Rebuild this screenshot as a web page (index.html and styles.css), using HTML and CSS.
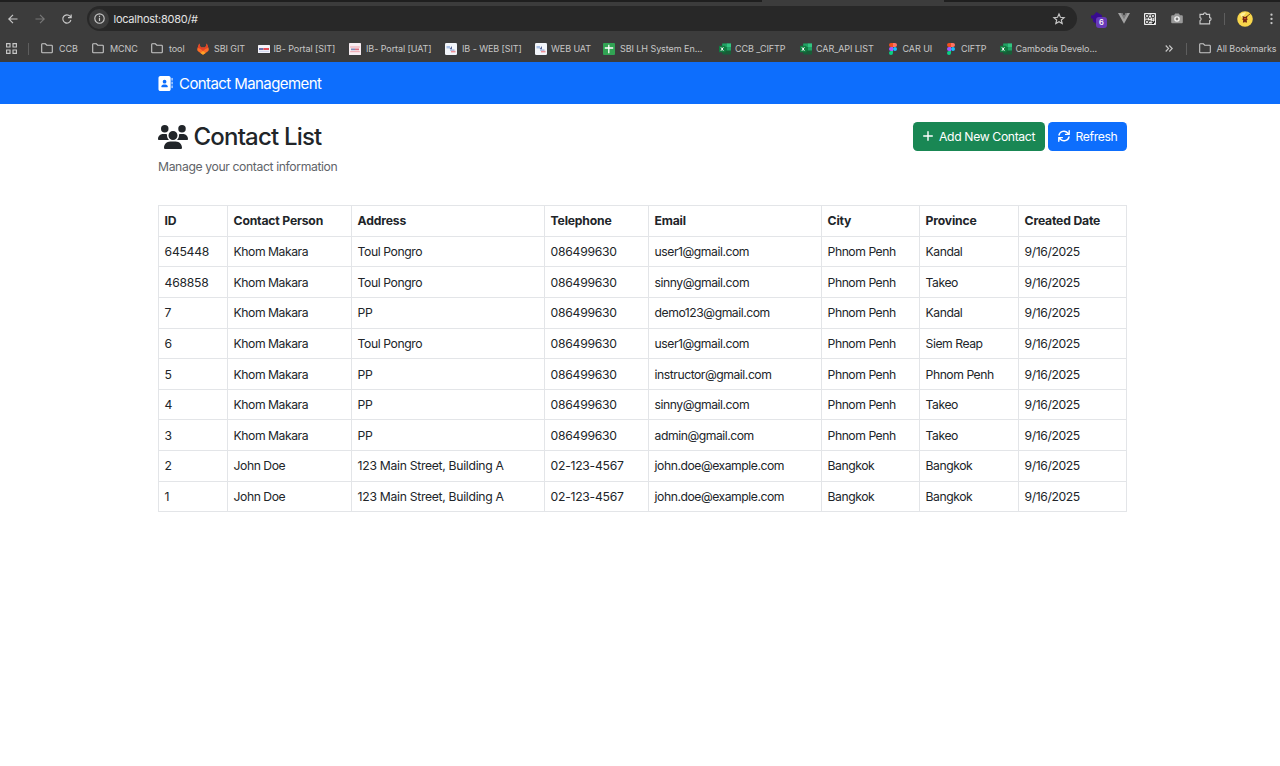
FILE: index.html
```html
<!DOCTYPE html>
<html lang="en">
<head>
<meta charset="utf-8">
<title>Contact Management</title>
<link rel="stylesheet" href="styles.css">
</head>
<body>
<svg class="defs" aria-hidden="true">
  <symbol id="folder" viewBox="0 0 12 11"><path d="M.7 9.1V1.5Q.7.8 1.4.8H4.4L5.7 2.2H10.6Q11.3 2.2 11.3 2.9V9.1Q11.3 9.8 10.6 9.8H1.4Q.7 9.8 .7 9.1Z" fill="none" stroke="#c7c7c7" stroke-width="1.1"/></symbol>
  <symbol id="web" viewBox="0 0 12 12"><rect width="12" height="12" rx="1.3" fill="#f2f5fa"/><path d="M1.5 3H5V5.4H1.5Z" fill="#a9c0e6"/><path d="M4.6 6 7 3V6.5Z" fill="#56679b"/><path d="M5 6.4H9.5V7.8H5Z" fill="#9db5e0"/><path d="M6 7.8H10.5V9.4H6Z" fill="#ee8f97"/></symbol>
  <symbol id="excel" viewBox="0 0 12 12"><path d="M3.2 1Q3.2.4 3.8.4H11.4Q12 .4 12 1V11Q12 11.6 11.4 11.6H3.8Q3.2 11.6 3.2 11Z" fill="#185c37"/><path d="M3.2.4H7.6V4H3.2ZM7.6 4H12V7.6H7.6Z" fill="#21a366"/><path d="M7.6.4H12V4H7.6Z" fill="#33c481"/><path d="M3.2 4H7.6V7.6H3.2Z" fill="#107c41"/><rect y="2.8" width="6.5" height="6.5" rx=".6" fill="#107c41"/><path d="M1.9 4.3 4.4 7.8M4.4 4.3 1.9 7.8" stroke="#fff" stroke-width="1"/></symbol>
  <symbol id="figma" viewBox="0 0 8 12"><path d="M2 0H4V4H2A2 2 0 0 1 2 0Z" fill="#f24e1e"/><path d="M4 0H6A2 2 0 0 1 6 4H4Z" fill="#ff7262"/><path d="M2 4H4V8H2A2 2 0 0 1 2 4Z" fill="#a259ff"/><circle cx="6" cy="6" r="2" fill="#1abcfe"/><path d="M2 8H4V10A2 2 0 1 1 2 8Z" fill="#0acf83"/></symbol>
</svg>

<header class="browser">
  <div class="tabstrip"><span class="tab-active"></span></div>
  <div class="toolbar">
    <svg width="10" height="10" viewBox="0 0 10 10" class="line"><path d="M9.5 5H1M5 .8.8 5 5 9.2"/></svg>
    <svg width="10" height="10" viewBox="0 0 10 10" class="line dim"><path d="M.5 5H9M5 .8 9.2 5 5 9.2"/></svg>
    <svg width="10" height="10" viewBox="0 0 10 10" class="line"><path d="M8.9 6A4.1 4.1 0 1 1 8 2.2L9.2 3.5M9.2.4V3.6H6"/></svg>
    <div class="omnibox">
      <span class="site-info"><svg width="11" height="11" viewBox="0 0 11 11" class="line"><circle cx="5.5" cy="5.5" r="4.7"/><path d="M5.5 4.8V8M5.5 2.8V4"/></svg></span>
      <span class="url">localhost:8080/#</span>
      <svg width="12" height="12" viewBox="0 0 12 12" class="line star"><path d="M6 .9 7.4 4.3 11.1 4.6 8.3 7 9.2 10.6 6 8.7 2.8 10.6 3.7 7 .9 4.6 4.6 4.3Z"/></svg>
    </div>
    <span class="ext">
      <svg width="14" height="14" viewBox="0 0 14 14"><path d="M6.5 0 12 3.2V9L6.5 12 3 9.5V7L1 6V3.5L3.6 3.3Z" fill="#380b8f"/></svg>
      <span class="badge">6</span>
    </span>
    <svg width="12" height="11" viewBox="0 0 12 11"><path d="M0 0H4.2L6 3.2 7.8 0H12L6 10.8Z" fill="#a3a3a3"/><path d="M2.5 0H4.2L6 3.2 7.8 0H9.5L6 6.2Z" fill="#7d7d7d"/></svg>
    <svg width="12" height="12" viewBox="0 0 12 12"><rect width="12" height="12" rx=".7" fill="#ededed"/><path d="M1.6 1.6H4.4V4.4H1.6ZM7.6 1.6H10.4V4.4H7.6ZM1.6 7.6H4.4V10.4H1.6Z" fill="none" stroke="#222" stroke-width=".9"/><path d="M5.5 1H6.3V3H5.5ZM5.3 4.3H6.5V6H5.3ZM1 5.5H4V6.3H1ZM5.3 7H6.5V9H5.3ZM8 5.5H9.3V6.5H8ZM10 5.4H11V6.4H10ZM5.5 10H6.5V11H5.5ZM7.5 7.7H8.8V8.5H10V7.5H11V9.7H10V11H7.5V10H8.6V9.2H7.5Z" fill="#222"/></svg>
    <svg width="12" height="11" viewBox="0 0 12 11"><path d="M1.2 2.2H3L4.2.5H7.8L9 2.2H10.8Q11.8 2.2 11.8 3.2V9.3Q11.8 10.3 10.8 10.3H1.2Q.2 10.3 .2 9.3V3.2Q.2 2.2 1.2 2.2Z" fill="#999"/><circle cx="6" cy="6" r="2.1" fill="#777" stroke="#f5f5f5" stroke-width="1.4"/></svg>
    <svg width="13" height="13" viewBox="0 0 13 13" class="line"><path d="M1 2.4H4.400A1.5 1.5 0 0 1 7.400 2.4H10.6V5.600A1.5 1.5 0 0 1 10.6 8.600V11.8H1V8.700A1.7 1.7 0 0 0 1 5.500Z"/></svg>
    <span class="rule"></span>
    <svg width="16" height="16" viewBox="0 0 16 16"><circle cx="8" cy="8" r="7.8" fill="#f8d64c"/><path d="M3 3.5A6.5 6.5 0 0 1 9 1.6L5 7Z" fill="#fff19a"/><path d="M8.5 6.5 14 2.2" stroke="#75511a" stroke-width="1"/><path d="M5.400 5 8 6 10.5 5 10 7 10.7 8.7 9.7 9 10 11.5H8.600L8 10.5 7.300 11.5H5.900L6.200 9 5.300 8.700 5.900 7Z" fill="#702413"/><path d="M7 7H9.3V8.2H7Z" fill="#c9512b"/></svg>
    <svg width="3" height="12" viewBox="0 0 3 12" fill="#c7c7c7"><circle cx="1.5" cy="1.700" r="1.15"/><circle cx="1.5" cy="5.900" r="1.15"/><circle cx="1.5" cy="10.100" r="1.15"/></svg>
  </div>
  <nav class="bookmarks">
    <svg width="11" height="11" viewBox="0 0 11 11" class="line"><path d="M.6.6H4V4H.6ZM7 .6H10.4V4H7ZM.6 7H4V10.4H.6ZM7 7H10.4V10.4H7Z"/></svg>
    <span class="rule"></span>
    <a class="bm folder"><svg width="12" height="11"><use href="#folder"/></svg>CCB</a>
    <a class="bm folder"><svg width="12" height="11"><use href="#folder"/></svg>MCNC</a>
    <a class="bm folder"><svg width="12" height="11"><use href="#folder"/></svg>tool</a>
    <a class="bm wide"><svg width="12" height="12" viewBox="0 0 12 12"><path d="M2.2.5 3.7 4.6H8.3L9.8.5 11.8 6Q12 7.5 10.7 8.5L6 11.7 1.3 8.5Q0 7.5 .2 6Z" fill="#fc6d26"/><path d="M2.2.5 3.7 4.6H8.3L9.8.5 11.3 4.7 8.4 6 6 8 3.6 6 .7 4.7Z" fill="#e24329"/><path d="M3.4 9.9 6 8 8.6 9.9 6 11.7Z" fill="#fca326"/></svg>SBI GIT</a>
    <a class="bm"><svg width="12" height="12" viewBox="0 0 12 12"><rect y="2" width="12" height="8" rx=".5" fill="#f4f4fa"/><path d="M1 5H5.5V7H1Z" fill="#6a70a8"/><path d="M5.5 5H11V7H5.5Z" fill="#e44c55"/><path d="M1 8.3H11" stroke="#aebbe0" stroke-width=".6"/></svg>IB- Portal [SIT]</a>
    <a class="bm wide"><svg width="12" height="12" viewBox="0 0 12 12"><rect width="12" height="12" rx=".6" fill="#f7edf2"/><path d="M1.2 4H10.8M1.2 8.7H10.8" stroke="#eb98a4" stroke-width=".9"/><path d="M2 5.5H6V7.2H2Z" fill="#8089b8"/><path d="M6 5.5H10V7.2H6Z" fill="#dc6c7c"/></svg>IB- Portal [UAT]</a>
    <a class="bm wide"><svg width="12" height="12"><use href="#web"/></svg>IB - WEB [SIT]</a>
    <a class="bm"><svg width="12" height="12"><use href="#web"/></svg>WEB UAT</a>
    <a class="bm wide"><svg width="12" height="12" viewBox="0 0 12 12"><rect width="12" height="12" rx="1" fill="#31a353"/><path d="M5.8 1.8V10.2M1.8 5H10.2" stroke="#fff" stroke-width="1.3"/></svg>SBI LH System En...</a>
    <a class="bm"><svg width="12" height="12"><use href="#excel"/></svg>CCB _CIFTP</a>
    <a class="bm"><svg width="12" height="12"><use href="#excel"/></svg>CAR_API LIST</a>
    <a class="bm fig"><svg width="8" height="12"><use href="#figma"/></svg>CAR UI</a>
    <a class="bm fig"><svg width="8" height="12"><use href="#figma"/></svg>CIFTP</a>
    <a class="bm"><svg width="12" height="12"><use href="#excel"/></svg>Cambodia Develo...</a>
    <svg width="8" height="7" viewBox="0 0 8 7" class="line"><path d="M.7.5 3.6 3.5.7 6.5M4.3.5 7.2 3.5 4.3 6.5"/></svg>
    <span class="rule"></span>
    <a class="bm folder all"><svg width="12" height="11"><use href="#folder"/></svg>All Bookmarks</a>
  </nav>
</header>

<div class="navbar">
  <svg width="15" height="15" viewBox="16 0 512 512" fill="#fff"><path d="M96 0C60.7 0 32 28.7 32 64V448C32 483.3 60.7 512 96 512H384C419.3 512 448 483.3 448 448V64C448 28.700 419.300 0 384 0ZM208 288H272C316.2 288 352 323.8 352 368C352 376.800 344.800 384 336 384H144C135.200 384 128 376.800 128 368C128 323.800 163.800 288 208 288ZM176 192A64 64 0 1 1 304 192A64 64 0 1 1 176 192Z" fill-rule="evenodd"/><path d="M496 80V144M496 208V272M496 336V400" stroke="#fff" stroke-width="34" stroke-linecap="round"/></svg>
  <span class="brand">Contact Management</span>
</div>

<main class="container">
  <div class="heading">
    <div>
      <h1><svg width="30" height="24" viewBox="0 0 640 512" fill="#212529"><path d="M144 0a80 80 0 1 1 0 160A80 80 0 1 1 144 0zM512 0a80 80 0 1 1 0 160A80 80 0 1 1 512 0zM0 298.7C0 239.8 47.8 192 106.7 192h42.7c15.9 0 31 3.5 44.6 9.7c-1.3 7.2-1.9 14.7-1.9 22.3c0 38.2 16.8 72.5 43.3 96H21.3C9.6 320 0 310.4 0 298.7zM404.6 320c26.6-23.5 43.3-57.8 43.3-96c0-7.6-.7-15-1.9-22.3c13.6-6.3 28.7-9.7 44.6-9.7h42.7C592.2 192 640 239.8 640 298.7c0 11.8-9.6 21.3-21.3 21.3H404.6zM224 224a96 96 0 1 1 192 0 96 96 0 1 1-192 0zM128 485.3C128 411.7 187.7 352 261.3 352H378.7C452.3 352 512 411.7 512 485.3c0 14.7-11.9 26.7-26.7 26.7H154.7c-14.7 0-26.7-11.9-26.7-26.7z"/></svg><span>Contact List</span></h1>
      <p class="subtitle">Manage your contact information</p>
    </div>
    <div class="actions">
      <button class="btn add"><svg width="10" height="10" viewBox="0 0 10 10"><path d="M5 .7V9.3M.7 5H9.3"/></svg><span>Add New Contact</span></button>
      <button class="btn refresh"><svg width="12" height="12" viewBox="0 0 12 12"><path d="M1 5A5 4.7 0 0 1 9.8 3L11 4.3M11.2.8V4.4H7.6M11 7A5 4.7 0 0 1 2.2 9L1 7.7M.8 11.2V7.6H4.4"/></svg><span>Refresh</span></button>
    </div>
  </div>

  <table class="contacts">
    <colgroup><col class="c-id"><col class="c-person"><col class="c-address"><col class="c-phone"><col class="c-email"><col class="c-city"><col class="c-province"><col class="c-date"></colgroup>
    <thead><tr><th>ID</th><th>Contact Person</th><th>Address</th><th>Telephone</th><th>Email</th><th>City</th><th>Province</th><th>Created Date</th></tr></thead>
    <tbody>
      <tr><td class="num">645448</td><td>Khom Makara</td><td class="addr">Toul Pongro</td><td class="num">086499630</td><td>user1@gmail.com</td><td>Phnom Penh</td><td>Kandal</td><td class="date">9/16/2025</td></tr>
      <tr><td class="num">468858</td><td>Khom Makara</td><td class="addr">Toul Pongro</td><td class="num">086499630</td><td>sinny@gmail.com</td><td>Phnom Penh</td><td>Takeo</td><td class="date">9/16/2025</td></tr>
      <tr><td class="num">7</td><td>Khom Makara</td><td class="addr">PP</td><td class="num">086499630</td><td>demo123@gmail.com</td><td>Phnom Penh</td><td>Kandal</td><td class="date">9/16/2025</td></tr>
      <tr><td class="num">6</td><td>Khom Makara</td><td class="addr">Toul Pongro</td><td class="num">086499630</td><td>user1@gmail.com</td><td>Phnom Penh</td><td>Siem Reap</td><td class="date">9/16/2025</td></tr>
      <tr><td class="num">5</td><td>Khom Makara</td><td class="addr">PP</td><td class="num">086499630</td><td>instructor@gmail.com</td><td>Phnom Penh</td><td>Phnom Penh</td><td class="date">9/16/2025</td></tr>
      <tr><td class="num">4</td><td>Khom Makara</td><td class="addr">PP</td><td class="num">086499630</td><td>sinny@gmail.com</td><td>Phnom Penh</td><td>Takeo</td><td class="date">9/16/2025</td></tr>
      <tr><td class="num">3</td><td>Khom Makara</td><td class="addr">PP</td><td class="num">086499630</td><td>admin@gmail.com</td><td>Phnom Penh</td><td>Takeo</td><td class="date">9/16/2025</td></tr>
      <tr><td class="num">2</td><td>John Doe</td><td class="addr long">123 Main Street, Building A</td><td class="num">02-123-4567</td><td>john.doe@example.com</td><td>Bangkok</td><td>Bangkok</td><td class="date">9/16/2025</td></tr>
      <tr><td class="num">1</td><td>John Doe</td><td class="addr long">123 Main Street, Building A</td><td class="num">02-123-4567</td><td>john.doe@example.com</td><td>Bangkok</td><td>Bangkok</td><td class="date">9/16/2025</td></tr>
    </tbody>
  </table>
</main>
</body>
</html>
```
FILE: styles.css
```css
* { box-sizing: border-box; }
body { margin: 0; background: #fff; color: #212529; font-family: Inter, "Liberation Sans", sans-serif; font-size: 12.2px; min-height: 766px; overflow: hidden; }
svg { display: block; flex: none; overflow: visible; }
.defs { width: 0; height: 0; position: absolute; }
.line { fill: none; stroke: #c7c7c7; stroke-width: 1.15; }
.dim { stroke: #777; }

.browser { height: 62px; background: #3c3c3c; color: #c7c7c7; }
.tabstrip { height: 2px; background: #1f1f1f; padding-left: 762px; }
.tab-active { display: block; width: 182px; height: 2px; background: #3c3c3c; }
.toolbar { height: 33px; padding-left: 8px; display: grid; align-items: center; grid-template-columns: 27px 27px 25px 1003px 28px 26px 27px 28px 25px 13px 33px 10px; }
.omnibox { width: 990px; height: 25px; border-radius: 13px; background: #282828; display: flex; align-items: center; padding: 0 12px 0 2px; }
.site-info { width: 20px; height: 20px; border-radius: 50%; background: #3c3c3c; display: grid; place-items: center; }
.url { flex: 1; margin-left: 4.5px; color: #e3e3e3; font-size: 11px; letter-spacing: -.27px; }
.ext { position: relative; width: 20px; height: 14px; }
.badge { position: absolute; left: 6px; top: 5px; width: 11px; height: 11px; border-radius: 3px; background: #673ab7; color: #fff; font-size: 7.5px; font-weight: 600; line-height: 11px; text-align: center; }
.rule { width: 1px; height: 12px; background: #5e5e5e; }
.bookmarks { height: 27px; padding-left: 6px; display: grid; align-items: center; grid-template-columns: 22px 13px 51px 59px 46px 60.5px 91.5px 96px 90px 68px 116px 81px 88.500px 58.500px 52.500px 165px 21px 13px 81px; }
.bm { display: flex; align-items: center; gap: 4px; font-size: 9px; letter-spacing: -.07px; white-space: nowrap; }
.bm.wide { gap: 5px; }
.bm.folder { gap: 6px; }
.bm.fig { gap: 6px; }

.navbar { height: 42px; background: #0d6efd; color: #fff; display: flex; align-items: center; padding: 0 0 0 158px; gap: 6px; }
.brand { font-size: 15px; letter-spacing: -.58px; }
.container { width: 969px; margin-left: 158px; }
.heading { height: 101px; padding-top: 18px; display: flex; justify-content: space-between; align-items: flex-start; }
h1 { margin: 0; height: 29px; display: flex; align-items: center; gap: 5.5px; font-size: 24px; font-weight: 500; line-height: 29px; letter-spacing: -.8px; }
.subtitle { margin: 7px 0 0; color: #5f6469; line-height: 18px; letter-spacing: -.38px; }
.actions { display: flex; gap: 3px; }
.btn { height: 28.5px; border: 0; border-radius: 4.5px; color: #fff; font: 12.2px Inter, "Liberation Sans", sans-serif; letter-spacing: -.36px; padding: 0 0 0 10px; display: flex; align-items: center; gap: 6px; white-space: nowrap; }
.btn svg { fill: none; stroke: #fff; stroke-width: 1.4; stroke-linecap: round; }
.add { width: 132px; background: #198754; }
.refresh { width: 79px; gap: 5.5px; background: #0d6efd; }

.contacts { width: 969px; table-layout: fixed; border-spacing: 0; border-left: 1px solid #e3e5e8; border-top: 1px solid #e3e5e8; }
.contacts th, .contacts td { height: 30.65px; padding: 1px 5.6px 0; border-right: 1px solid #e3e5e8; border-bottom: 1px solid #e3e5e8; text-align: left; white-space: nowrap; line-height: 18px; letter-spacing: -.47px; }
.contacts th { font-weight: 700; letter-spacing: -.19px; padding-top: 0; }
.contacts .num { letter-spacing: -.27px; }
.contacts .date { letter-spacing: -.4px; }
.contacts .addr { letter-spacing: -.42px; }
.contacts .long { letter-spacing: -.3px; }
.c-id { width: 69px; }
.c-person { width: 124px; }
.c-address { width: 193px; }
.c-phone { width: 104px; }
.c-email { width: 173px; }
.c-city { width: 98px; }
.c-province { width: 99px; }
.c-date { width: 108px; }
```
